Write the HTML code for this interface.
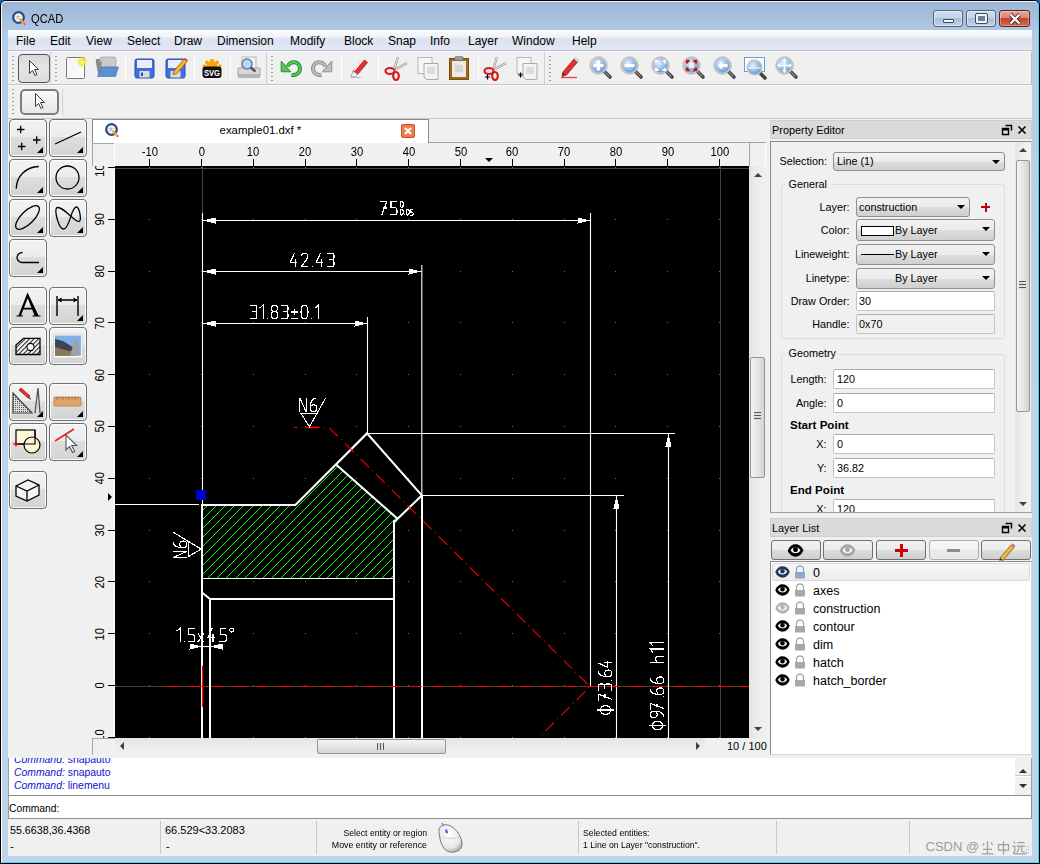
<!DOCTYPE html>
<html><head><meta charset="utf-8">
<style>
*{box-sizing:border-box;margin:0;padding:0}
html,body{width:1040px;height:864px;overflow:hidden}
body{position:relative;font-family:"Liberation Sans",sans-serif;font-size:11px;color:#000;background:#bcd2ea}
.a{position:absolute}
.t{position:absolute;white-space:nowrap;line-height:1}
.tb{position:absolute;border:1px solid #707070;border-radius:4px;background:linear-gradient(#f3f3f3 0,#ececec 46%,#dedede 47%,#d3d3d3 100%);box-shadow:inset 0 0 0 1px rgba(255,255,255,.85)}
.tri{position:absolute;width:0;height:0;border-left:6px solid transparent;border-bottom:6px solid #000}
.cb{position:absolute;border:1px solid #8e8f8f;border-radius:3px;background:linear-gradient(#f2f2f2 0,#ebebeb 50%,#dddddd 51%,#cfcfcf 100%)}
.cb:after{content:"";position:absolute;right:4px;top:7px;border-left:4px solid transparent;border-right:4px solid transparent;border-top:4px solid #000}
.ed{position:absolute;border:1px solid #c5c5c5;border-top-color:#abadb3;background:#fff;border-radius:2px}
.sep{position:absolute;width:1px;background:#d4d4d4;border-right:1px solid #fff}
.hd{position:absolute;width:2px;background:repeating-linear-gradient(#9a9a9a 0,#9a9a9a 1px,transparent 1px,transparent 4px)}
</style></head><body>
<!-- window frame -->
<div class="a" style="left:0;top:0;width:1040px;height:864px;background:#1a5fb4"></div>
<div class="a" style="left:0;top:0;width:1040px;height:864px;border:1px solid #000;border-radius:6px 6px 0 0;background:linear-gradient(#9ab4d4 0,#a9c2de 20px,#b6cde6 40px,#bcd2ea 300px,#bed4eb 864px)"></div>
<div class="a" style="left:1px;top:1px;width:1038px;height:862px;border:1px solid #fff;border-right-color:#3ad8f4;border-bottom-color:#3ad8f4;border-radius:5px 5px 0 0;opacity:.9"></div>
<!-- title -->
<svg class="a" style="left:10.5px;top:10.2px" width="16" height="16" viewBox="0 0 16 16"><circle cx="7.5" cy="7.5" r="5.3" fill="#fbfbfb" stroke="#2c4a92" stroke-width="2.3"/><path d="M4.5 6.5h5M7 4.5v5" stroke="#bbb" stroke-width=".8"/><path d="M5 9.5l3-3" stroke="#e07070" stroke-width=".8"/><path d="M8.5 8.5l4 4.5" stroke="#f2a818" stroke-width="2.2"/><path d="M12.7 13.2l1.6 1.6" stroke="#e06060" stroke-width="2"/></svg>
<div class="t" style="left:31px;top:12.5px;font-size:12px;color:#000;transform:scaleX(.93);transform-origin:left">QCAD</div>
<div class="a" style="left:933px;top:10px;width:30px;height:17px;border:1px solid #52627a;border-radius:3px;background:linear-gradient(#cddcee 0,#c3d4ea 45%,#a9bfdb 50%,#bcd0e8 100%);box-shadow:inset 0 0 0 1px rgba(255,255,255,.5)"><div class="a" style="left:9px;top:8px;width:11px;height:4px;background:#f4f4f4;border:1px solid #3c4a60;border-radius:1px"></div></div>
<div class="a" style="left:966px;top:10px;width:30px;height:17px;border:1px solid #52627a;border-radius:3px;background:linear-gradient(#cddcee 0,#c3d4ea 45%,#a9bfdb 50%,#bcd0e8 100%);box-shadow:inset 0 0 0 1px rgba(255,255,255,.5)"><div class="a" style="left:9px;top:3px;width:11px;height:9px;border:2px solid #f4f4f4;outline:1px solid #3c4a60;border-radius:1px;background:#6b7d99"></div></div>
<div class="a" style="left:999px;top:10px;width:31px;height:17px;border:1px solid #5a1f1f;border-radius:3px;background:linear-gradient(#e8a495 0,#dc8a78 45%,#c2442a 50%,#d7694f 100%);box-shadow:inset 0 0 0 1px rgba(255,255,255,.35)"><svg class="a" style="left:8px;top:2px" width="14" height="12" viewBox="0 0 14 12"><path d="M2.5 1.5L11.5 10.5M11.5 1.5L2.5 10.5" stroke="#3b2020" stroke-width="4"/><path d="M2.5 1.5L11.5 10.5M11.5 1.5L2.5 10.5" stroke="#f6f6f6" stroke-width="2.4"/></svg></div>
<!-- menubar -->
<div class="a" style="left:8px;top:30px;width:1024px;height:21px;background:linear-gradient(#fbfcfe 0,#f1f3f9 7px,#dfe5f2 8px,#dde3f1 13px,#e5e9f5 20px);border-bottom:1px solid #b9bfcf"></div>
<div class="t" style="left:16px;top:35px;font-size:12px">File</div>
<div class="t" style="left:50px;top:35px;font-size:12px">Edit</div>
<div class="t" style="left:86px;top:35px;font-size:12px">View</div>
<div class="t" style="left:127px;top:35px;font-size:12px">Select</div>
<div class="t" style="left:174px;top:35px;font-size:12px">Draw</div>
<div class="t" style="left:217px;top:35px;font-size:12px">Dimension</div>
<div class="t" style="left:290px;top:35px;font-size:12px">Modify</div>
<div class="t" style="left:344px;top:35px;font-size:12px">Block</div>
<div class="t" style="left:388px;top:35px;font-size:12px">Snap</div>
<div class="t" style="left:430px;top:35px;font-size:12px">Info</div>
<div class="t" style="left:468px;top:35px;font-size:12px">Layer</div>
<div class="t" style="left:512px;top:35px;font-size:12px">Window</div>
<div class="t" style="left:572px;top:35px;font-size:12px">Help</div>
<!-- toolbars -->
<div class="a" style="left:8px;top:51px;width:1024px;height:34px;background:#f0f0f0;border-bottom:1px solid #c4c4c4;border-right:1px solid #bdbdbd;border-top:1px solid #fafafa"></div>
<div class="a" style="left:8px;top:85px;width:1024px;height:34px;background:#f0f0f0;border-bottom:1px solid #c4c4c4;border-top:1px solid #fafafa"></div>
<div class="hd" style="left:12px;top:56px;height:26px"></div>
<div class="a" style="left:18px;top:54px;width:32px;height:29px;border:1px solid #555;border-radius:4px;background:linear-gradient(#d9d9d9,#e4e4e4 50%,#dcdcdc)"></div>
<svg class="a" style="left:26px;top:59px" width="16" height="20" viewBox="0 0 16 20"><path d="M3.5 1.5v13l3-3 2.5 5 2-1-2.5-5h4z" fill="#fff" stroke="#3a3a3a" stroke-width="1"/></svg>
<div class="a" style="left:50px;top:52px;width:1px;height:32px;background:#d0d0d0"></div>
<div class="hd" style="left:55px;top:56px;height:26px"></div>
<svg class="a" style="left:64px;top:55px" width="26" height="26" viewBox="0 0 26 26"><defs><linearGradient id="nd" x1="0" y1="0" x2="1" y2="1"><stop offset="0" stop-color="#f2f2f2"/><stop offset="1" stop-color="#fdfdfd"/></linearGradient><radialGradient id="gl"><stop offset="0" stop-color="#ffffc0"/><stop offset=".45" stop-color="#f0ea20"/><stop offset="1" stop-color="#f0ea20" stop-opacity="0"/></radialGradient></defs><rect x="2.5" y="2.5" width="18" height="21" rx="1" fill="url(#nd)" stroke="#7a7a7a"/><circle cx="18" cy="7" r="5.5" fill="url(#gl)"/></svg>
<svg class="a" style="left:94px;top:56px" width="26" height="24" viewBox="0 0 26 24"><path d="M2 3h6l2 2h-8z" fill="#888"/><rect x="6" y="1" width="16" height="10" rx="2" fill="#c9c9c9" stroke="#999" stroke-width=".6"/><path d="M1.5 4.5l3 15.5h1L8 6z" fill="#8a8a8a"/><path d="M7 11h17.5l-3 9.5H3.5z" fill="#5b8fd0" stroke="#4a78b8" stroke-width=".7"/></svg>
<div class="sep" style="left:125px;top:56px;height:24px"></div>
<svg class="a" style="left:134px;top:58px" width="21" height="21" viewBox="0 0 21 21"><rect x="1" y="1" width="19" height="19" rx="2" fill="#3f70e0" stroke="#2a4fb5"/><rect x="3" y="2" width="15" height="8" fill="#e8eefa"/><rect x="5.5" y="13" width="10" height="6.5" fill="#dcdcdc"/><rect x="7" y="14.5" width="2" height="3.5" fill="#2a4fb5"/></svg>
<svg class="a" style="left:165px;top:56px" width="24" height="24" viewBox="0 0 24 24"><rect x="1" y="3" width="19" height="19" rx="2" fill="#3f70e0" stroke="#2a4fb5"/><rect x="3" y="4" width="15" height="8" fill="#e8eefa"/><rect x="5.5" y="15" width="10" height="6.5" fill="#dcdcdc"/><path d="M9 15l10-12 3 2.5-10 12-4 1z" fill="#f5b630" stroke="#8a5a10" stroke-width=".8"/><path d="M19 3l3 2.5 1-1.2-3-2.5z" fill="#e04040"/></svg>
<div class="sep" style="left:194px;top:56px;height:24px"></div>
<svg class="a" style="left:201px;top:56px" width="22" height="24" viewBox="0 0 22 24"><g fill="#f7a600"><circle cx="11" cy="5" r="2.2"/><circle cx="6" cy="6.5" r="2"/><circle cx="16" cy="6.5" r="2"/><circle cx="3.2" cy="10" r="1.8"/><circle cx="18.8" cy="10" r="1.8"/><circle cx="11" cy="10.5" r="5.5"/></g><rect x="1.5" y="10.5" width="19" height="11.5" rx="3" fill="#111"/><text x="11" y="20" font-family="Liberation Sans" font-weight="bold" font-size="9" fill="#fff" text-anchor="middle" transform="translate(11 0) scale(.85 1) translate(-11 0)">SVG</text></svg>
<div class="sep" style="left:230px;top:56px;height:24px"></div>
<svg class="a" style="left:236px;top:55px" width="26" height="26" viewBox="0 0 26 26"><rect x="6" y="2" width="14" height="12" fill="#f4f4f4" stroke="#aaa" stroke-width=".8"/><path d="M2 13h22v8h-22z" fill="#d8d8d8" stroke="#9a9a9a" stroke-width=".8"/><rect x="2" y="19" width="22" height="4" fill="#b5b5b5"/><circle cx="11" cy="9" r="5" fill="#bcd6f4" stroke="#5a7fa8" stroke-width="1.5"/><path d="M14.5 12.5l5 4" stroke="#555" stroke-width="2.4"/></svg>
<div class="a" style="left:266px;top:52px;width:1px;height:32px;background:#d0d0d0"></div>
<div class="hd" style="left:271px;top:56px;height:26px"></div>
<svg class="a" style="left:279px;top:57px" width="24" height="22" viewBox="0 0 24 22"><path d="M8.5 9.8A6.4 6.4 0 1 1 12.5 17.6" fill="none" stroke="#1f8a32" stroke-width="4"/><path d="M8.5 9.8A6.4 6.4 0 1 1 12.5 17.6" fill="none" stroke="#5cc25c" stroke-width="2.2"/><path d="M2.2 4.1V14.8H11.9Z" fill="#5cc25c" stroke="#1f8a32" stroke-width=".9"/></svg>
<svg class="a" style="left:310px;top:57px" width="24" height="22" viewBox="0 0 24 22"><g transform="translate(24 0) scale(-1 1)"><path d="M8.5 9.8A6.4 6.4 0 1 1 12.5 17.6" fill="none" stroke="#8a8a8a" stroke-width="4"/><path d="M8.5 9.8A6.4 6.4 0 1 1 12.5 17.6" fill="none" stroke="#bdbdbd" stroke-width="2.2"/><path d="M2.2 4.1V14.8H11.9Z" fill="#bdbdbd" stroke="#8a8a8a" stroke-width=".9"/></g></svg>
<div class="sep" style="left:341px;top:56px;height:24px"></div>
<svg class="a" style="left:349px;top:56px" width="24" height="24" viewBox="0 0 24 24"><path d="M4 15l10-12 4.5 3.5-10 12z" fill="#e03030" stroke="#a01818" stroke-width=".8"/><path d="M5 14.5l10-12" stroke="#fff" stroke-width="1.5"/><path d="M4 15l4.5 3.5-2 2.5-4.5-.5z" fill="#eee" stroke="#999" stroke-width=".8"/><path d="M2 21.5h10" stroke="#bbb"/></svg>
<div class="sep" style="left:378px;top:56px;height:24px"></div>
<svg class="a" style="left:384px;top:55px" width="26" height="26" viewBox="0 0 26 26"><path d="M10 15l4-13M12 14l11-6" stroke="#999" stroke-width="2.4"/><path d="M10 15l4-13M12 14l11-6" stroke="#e8e8e8" stroke-width="1"/><ellipse cx="6" cy="16" rx="4.5" ry="3" fill="none" stroke="#d81818" stroke-width="2.2"/><ellipse cx="12" cy="21" rx="2.8" ry="4" fill="none" stroke="#d81818" stroke-width="2.2"/></svg>
<svg class="a" style="left:416px;top:56px" width="26" height="25" viewBox="0 0 26 25"><rect x="2" y="1.5" width="14" height="16" fill="#f6f6f6" stroke="#aaa" stroke-width=".8"/><path d="M8 7.5h14v16h-11.5l-2.5-2.5z" fill="#f4f4f4" stroke="#999" stroke-width=".8"/><rect x="11" y="11" width="8" height="7" fill="#ddd"/></svg>
<svg class="a" style="left:447px;top:55px" width="25" height="26" viewBox="0 0 25 26"><rect x="2.5" y="3.5" width="19" height="21" fill="#a0661a" stroke="#7a4a10"/><rect x="5" y="6" width="14" height="16" fill="#eaeaea"/><rect x="8" y="1.5" width="8" height="4" rx="1" fill="#9a9a9a" stroke="#666" stroke-width=".6"/><rect x="8" y="10" width="8" height="7" fill="#d6d6d6"/></svg>
<div class="sep" style="left:478px;top:56px;height:24px"></div>
<svg class="a" style="left:483px;top:55px" width="26" height="26" viewBox="0 0 26 26"><path d="M10 15l4-13M12 14l11-6" stroke="#999" stroke-width="2.4"/><path d="M10 15l4-13M12 14l11-6" stroke="#e8e8e8" stroke-width="1"/><ellipse cx="6" cy="16" rx="4.5" ry="3" fill="none" stroke="#d81818" stroke-width="2.2"/><ellipse cx="12" cy="21" rx="2.8" ry="4" fill="none" stroke="#d81818" stroke-width="2.2"/><path d="M2 22h5M4.5 19.5v5" stroke="#000" stroke-width="1.2"/></svg>
<svg class="a" style="left:515px;top:56px" width="26" height="25" viewBox="0 0 26 25"><rect x="2" y="1.5" width="14" height="16" fill="#f6f6f6" stroke="#aaa" stroke-width=".8"/><path d="M8 7.5h14v16h-11.5l-2.5-2.5z" fill="#f4f4f4" stroke="#999" stroke-width=".8"/><rect x="11" y="11" width="8" height="7" fill="#ddd"/><path d="M3 19h5M5.5 16.5v5" stroke="#000" stroke-width="1.2"/></svg>
<div class="a" style="left:544px;top:52px;width:1px;height:32px;background:#d0d0d0"></div>
<div class="hd" style="left:549px;top:56px;height:26px"></div>
<svg class="a" style="left:559px;top:56px" width="22" height="24" viewBox="0 0 22 24"><path d="M4 16l11-13 3.5 3-11 13-4.5 1.5z" fill="#e03030" stroke="#901818" stroke-width=".8"/><path d="M15 3l3.5 3 1.2-1.4-3.5-3z" fill="#eee" stroke="#888" stroke-width=".6"/><path d="M3.5 17.5l1.5 1.3" stroke="#222" stroke-width="1.5"/><path d="M2 21.5h16" stroke="#f04040" stroke-width="1.3"/></svg>
<svg class="a" style="left:588px;top:55px" width="26" height="26" viewBox="0 0 26 26"><defs><radialGradient id="mg589" cx=".4" cy=".35" r=".7"><stop offset="0" stop-color="#e6f1fc"/><stop offset=".6" stop-color="#8fb7e6"/><stop offset="1" stop-color="#5d8fcf"/></radialGradient></defs><path d="M15.5 15.5l6.5 6.5" stroke="#444" stroke-width="3.6" stroke-linecap="round"/><path d="M15.5 15.5l6 6" stroke="#888" stroke-width="1.2"/><circle cx="10.5" cy="10.5" r="7.9" fill="url(#mg589)" stroke="#cfcfcf" stroke-width="1.5"/><circle cx="10.5" cy="10.5" r="8.7" fill="none" stroke="#9a9a9a" stroke-width=".6"/><path d="M10.5 5.5v10M5.5 10.5h10" stroke="#fff" stroke-width="3"/></svg><svg class="a" style="left:619px;top:55px" width="26" height="26" viewBox="0 0 26 26"><defs><radialGradient id="mg620" cx=".4" cy=".35" r=".7"><stop offset="0" stop-color="#e6f1fc"/><stop offset=".6" stop-color="#8fb7e6"/><stop offset="1" stop-color="#5d8fcf"/></radialGradient></defs><path d="M15.5 15.5l6.5 6.5" stroke="#444" stroke-width="3.6" stroke-linecap="round"/><path d="M15.5 15.5l6 6" stroke="#888" stroke-width="1.2"/><circle cx="10.5" cy="10.5" r="7.9" fill="url(#mg620)" stroke="#cfcfcf" stroke-width="1.5"/><circle cx="10.5" cy="10.5" r="8.7" fill="none" stroke="#9a9a9a" stroke-width=".6"/><path d="M5.5 10.5h10" stroke="#fff" stroke-width="3"/></svg><svg class="a" style="left:650px;top:55px" width="26" height="26" viewBox="0 0 26 26"><defs><radialGradient id="mg651" cx=".4" cy=".35" r=".7"><stop offset="0" stop-color="#e6f1fc"/><stop offset=".6" stop-color="#8fb7e6"/><stop offset="1" stop-color="#5d8fcf"/></radialGradient></defs><path d="M15.5 15.5l6.5 6.5" stroke="#444" stroke-width="3.6" stroke-linecap="round"/><path d="M15.5 15.5l6 6" stroke="#888" stroke-width="1.2"/><circle cx="10.5" cy="10.5" r="7.9" fill="url(#mg651)" stroke="#cfcfcf" stroke-width="1.5"/><circle cx="10.5" cy="10.5" r="8.7" fill="none" stroke="#9a9a9a" stroke-width=".6"/><path d="M6 8V6h2.5M13 6h2v2.5M15 13v2h-2.5M8.5 15H6v-2.5" stroke="#fff" stroke-width="1.8" fill="none"/></svg><svg class="a" style="left:681px;top:55px" width="26" height="26" viewBox="0 0 26 26"><defs><radialGradient id="mg682" cx=".4" cy=".35" r=".7"><stop offset="0" stop-color="#e6f1fc"/><stop offset=".6" stop-color="#8fb7e6"/><stop offset="1" stop-color="#5d8fcf"/></radialGradient></defs><path d="M15.5 15.5l6.5 6.5" stroke="#444" stroke-width="3.6" stroke-linecap="round"/><path d="M15.5 15.5l6 6" stroke="#888" stroke-width="1.2"/><circle cx="10.5" cy="10.5" r="7.9" fill="url(#mg682)" stroke="#cfcfcf" stroke-width="1.5"/><circle cx="10.5" cy="10.5" r="8.7" fill="none" stroke="#9a9a9a" stroke-width=".6"/><path d="M6 8.5V6h2.5M12.5 6h2.5v2.5M15 12.5v2.5h-2.5M8.5 15H6v-2.5" stroke="#d01010" stroke-width="2.4" fill="none"/><rect x="8" y="8" width="5" height="5" fill="#e8eef8"/></svg><svg class="a" style="left:712px;top:55px" width="26" height="26" viewBox="0 0 26 26"><defs><radialGradient id="mg713" cx=".4" cy=".35" r=".7"><stop offset="0" stop-color="#e6f1fc"/><stop offset=".6" stop-color="#8fb7e6"/><stop offset="1" stop-color="#5d8fcf"/></radialGradient></defs><path d="M15.5 15.5l6.5 6.5" stroke="#444" stroke-width="3.6" stroke-linecap="round"/><path d="M15.5 15.5l6 6" stroke="#888" stroke-width="1.2"/><circle cx="10.5" cy="10.5" r="7.9" fill="url(#mg713)" stroke="#cfcfcf" stroke-width="1.5"/><circle cx="10.5" cy="10.5" r="8.7" fill="none" stroke="#9a9a9a" stroke-width=".6"/><path d="M5.5 10.5l4.5-4v2.5h5.5v3h-5.5v2.5z" fill="#fff"/></svg><svg class="a" style="left:743px;top:55px" width="28" height="26" viewBox="0 0 28 26"><rect x="1.5" y="2.5" width="20" height="14" fill="#fff" stroke="#6f9ad0" stroke-width="1"/><defs><radialGradient id="mgw" cx=".4" cy=".35" r=".7"><stop offset="0" stop-color="#e6f1fc"/><stop offset=".6" stop-color="#8fb7e6"/><stop offset="1" stop-color="#5d8fcf"/></radialGradient></defs><path d="M16 17l6 6" stroke="#444" stroke-width="3.6" stroke-linecap="round"/><circle cx="11.5" cy="12.5" r="7.5" fill="url(#mgw)" stroke="#c8c8c8" stroke-width="1.4"/><path d="M5 13h13" stroke="#fff" stroke-width="1"/></svg><svg class="a" style="left:774px;top:55px" width="26" height="26" viewBox="0 0 26 26"><defs><radialGradient id="mg775" cx=".4" cy=".35" r=".7"><stop offset="0" stop-color="#e6f1fc"/><stop offset=".6" stop-color="#8fb7e6"/><stop offset="1" stop-color="#5d8fcf"/></radialGradient></defs><path d="M15.5 15.5l6.5 6.5" stroke="#444" stroke-width="3.6" stroke-linecap="round"/><path d="M15.5 15.5l6 6" stroke="#888" stroke-width="1.2"/><circle cx="10.5" cy="10.5" r="7.9" fill="url(#mg775)" stroke="#cfcfcf" stroke-width="1.5"/><circle cx="10.5" cy="10.5" r="8.7" fill="none" stroke="#9a9a9a" stroke-width=".6"/><path d="M10.5 3l2.5 3h-5zM10.5 18l2.5-3h-5zM3 10.5l3-2.5v5zM18 10.5l-3-2.5v5z" fill="#fff"/><path d="M10.5 5v11M5 10.5h11" stroke="#fff" stroke-width="1.4"/></svg>
<!-- toolbar 2 -->
<div class="hd" style="left:12px;top:89px;height:26px"></div>
<div class="a" style="left:20px;top:89px;width:39px;height:26px;border:2px solid #7d7d7d;border-radius:5px;background:linear-gradient(#fafafa,#efefef 50%,#e8e8e8)"></div>
<svg class="a" style="left:32px;top:92px" width="16" height="20" viewBox="0 0 16 20"><path d="M3.5 1.5v13l3-3 2.5 5 2-1-2.5-5h4z" fill="#fff" stroke="#3a3a3a" stroke-width="1"/></svg>
<div class="a" style="left:62px;top:89px;width:1px;height:26px;background:#d0d0d0"></div>

<!-- main -->
<div class="a" style="left:8px;top:119px;width:1024px;height:640px;background:#f0f0f0"></div>
<div class="tb" style="left:9px;top:119px;width:38px;height:38px"></div><svg class="a" style="left:9px;top:119px" width="38" height="38" viewBox="0 0 38 38"><path d="M8 10.5h7.5M11.7 6.8v7.5M24 21h7.5M27.7 17.3v7.5M9 27.5h7.5M12.7 23.8v7.5" stroke="#000" fill="none" stroke-width="1.3"/></svg><div class="tri" style="left:37px;top:147px"></div><div class="tb" style="left:49px;top:119px;width:38px;height:38px"></div><svg class="a" style="left:49px;top:119px" width="38" height="38" viewBox="0 0 38 38"><path d="M6 25L32 13" stroke="#000" fill="none" stroke-width="1.3"/></svg><div class="tri" style="left:77px;top:147px"></div><div class="tb" style="left:9px;top:159px;width:38px;height:38px"></div><svg class="a" style="left:9px;top:159px" width="38" height="38" viewBox="0 0 38 38"><path d="M7.2 29.8C7.5 17 17 8 29.8 7.5" stroke="#000" fill="none" stroke-width="1.3"/></svg><div class="tri" style="left:37px;top:187px"></div><div class="tb" style="left:49px;top:159px;width:38px;height:38px"></div><svg class="a" style="left:49px;top:159px" width="38" height="38" viewBox="0 0 38 38"><circle cx="18.5" cy="18.5" r="11.5" stroke="#000" fill="none" stroke-width="1.3"/></svg><div class="tri" style="left:77px;top:187px"></div><div class="tb" style="left:9px;top:199px;width:38px;height:38px"></div><svg class="a" style="left:9px;top:199px" width="38" height="38" viewBox="0 0 38 38"><ellipse cx="18.5" cy="18.5" rx="15.5" ry="6.3" transform="rotate(-45 18.5 18.5)" stroke="#000" fill="none" stroke-width="1.3"/></svg><div class="tri" style="left:37px;top:227px"></div><div class="tb" style="left:49px;top:199px;width:38px;height:38px"></div><svg class="a" style="left:49px;top:199px" width="38" height="38" viewBox="0 0 38 38"><path d="M7.5 9C5.5 12 9.5 30 14.5 30C19 30 21 19 23 14C25 9 27 7 28.5 8.5C30.5 10.5 33 21.5 30 22.5C26.5 24 12 5 7.5 9Z" stroke="#000" fill="none" stroke-width="1.3"/></svg><div class="tri" style="left:77px;top:227px"></div><div class="tb" style="left:9px;top:239px;width:38px;height:38px"></div><svg class="a" style="left:9px;top:239px" width="38" height="38" viewBox="0 0 38 38"><path d="M13.5 13.5C10.5 13.5 8 16 8 18.5S10.5 23.5 13 23.5H30" stroke="#000" fill="none" stroke-width="1.3"/></svg><div class="tri" style="left:37px;top:267px"></div><div class="tb" style="left:9px;top:287px;width:38px;height:38px"></div><svg class="a" style="left:9px;top:287px" width="38" height="38" viewBox="0 0 38 38"><path d="M18.5 5.5L9.5 28.5H7.5V29.5H14V28.5H12L14.3 22.5H23.2L25.5 28.5H23.5V29.5H31.5V28.5H29.5ZM15 20.8L18.7 11.2L22.5 20.8Z" fill="#000"/></svg><div class="tb" style="left:49px;top:287px;width:38px;height:38px"></div><svg class="a" style="left:49px;top:287px" width="38" height="38" viewBox="0 0 38 38"><path d="M8 9v20M29 9v20M9 13h19" stroke="#000" fill="none" stroke-width="1.4"/><path d="M8.5 13l4-2.5v5zM28.5 13l-4-2.5v5z" fill="#000"/></svg><div class="tri" style="left:77px;top:315px"></div><div class="tb" style="left:9px;top:327px;width:38px;height:38px"></div><svg class="a" style="left:9px;top:327px" width="38" height="38" viewBox="0 0 38 38"><defs><pattern id="ht" width="3.2" height="3.2" patternUnits="userSpaceOnUse" patternTransform="rotate(45)"><rect width="3.2" height="3.2" fill="#f4f4f4"/><rect width="1" height="3.2" fill="#222"/></pattern></defs><path d="M7 27.5V18L14.5 11.3H31V27.5Z" fill="url(#ht)" stroke="#000" stroke-width="1.3"/><circle cx="21.5" cy="20" r="3.6" fill="#f4f4f4" stroke="#000" stroke-width="1.1"/></svg><div class="tb" style="left:49px;top:327px;width:38px;height:38px"></div><svg class="a" style="left:49px;top:327px" width="38" height="38" viewBox="0 0 38 38"><rect x="4.5" y="7" width="29" height="24" fill="#fafafa" stroke="#d0d0d0" stroke-width=".8"/><rect x="6" y="8.5" width="26" height="20" fill="#7fb0e8"/><path d="M6 12L14 14L22 19L26 22L26 28.5H6Z" fill="#3c4450"/><path d="M6 20L20 24L26 23L26 28.5H6Z" fill="#8a7858"/><path d="M26 12L29 12L31 28.5L21 28.5Z" fill="#a0a0a0"/></svg><div class="tb" style="left:9px;top:383px;width:38px;height:38px"></div><svg class="a" style="left:9px;top:383px" width="38" height="38" viewBox="0 0 38 38"><defs><pattern id="dt" width="2" height="2" patternUnits="userSpaceOnUse"><rect width="2" height="2" fill="#ddd"/><rect width="1" height="1" fill="#555"/></pattern></defs><path d="M4 10v20h19z" fill="url(#dt)" stroke="#444" stroke-width="1.2"/><path d="M10 7l9 8 2-2-9-8z" fill="#e03030" stroke="#901010" stroke-width=".7"/><path d="M19 15l3 2-1-3z" fill="#333"/><path d="M29 5l-3 25M29 5l2 25" stroke="#555" stroke-width="1.3" fill="none"/></svg><div class="tri" style="left:37px;top:411px"></div><div class="tb" style="left:49px;top:383px;width:38px;height:38px"></div><svg class="a" style="left:49px;top:383px" width="38" height="38" viewBox="0 0 38 38"><rect x="5" y="14" width="27" height="9" rx="1" fill="#e0a46a" stroke="#b87a40" stroke-width=".8"/><path d="M8 14v3M11 14v2M14 14v3M17 14v2M20 14v3M23 14v2M26 14v3M29 14v2" stroke="#9a6030" stroke-width=".8"/></svg><div class="tri" style="left:77px;top:411px"></div><div class="tb" style="left:9px;top:423px;width:38px;height:38px"></div><svg class="a" style="left:9px;top:423px" width="38" height="38" viewBox="0 0 38 38"><rect x="7" y="7" width="19" height="14" fill="#fff8d8" stroke="#000" stroke-width="1.2"/><circle cx="23" cy="22" r="8" fill="#fff8d8" stroke="#000" stroke-width="1.2"/><path d="M7 21h19V7" fill="none" stroke="#000" stroke-width="1.2"/><path d="M4.5 21h5M7 18.5v5" stroke="#e00" stroke-width="1.3"/></svg><div class="tb" style="left:49px;top:423px;width:38px;height:38px"></div><svg class="a" style="left:49px;top:423px" width="38" height="38" viewBox="0 0 38 38"><path d="M6 18L25 6" stroke="#e82020" stroke-width="1.6"/><path d="M17 12v15l3.5-3.5 3 6 2.2-1-3-6h5z" fill="#fff" stroke="#555" stroke-width="1.1"/></svg><div class="tri" style="left:77px;top:451px"></div><div class="tb" style="left:9px;top:471px;width:38px;height:38px"></div><svg class="a" style="left:9px;top:471px" width="38" height="38" viewBox="0 0 38 38"><path d="M7 15l12-6 11 5v10l-12 6-11-5z" fill="#f4f4f4" stroke="#000" stroke-width="1.3"/><path d="M7 15l11 5 12-6M18 20v10" fill="none" stroke="#000" stroke-width="1.3"/></svg>
<div class="a" style="left:92px;top:119px;width:337px;height:25px;background:#fff;border:1px solid #898c95;border-bottom:none"></div><svg class="a" style="left:104.4px;top:122.2px" width="16" height="16" viewBox="0 0 16 16"><circle cx="7.5" cy="7.5" r="5.3" fill="#fbfbfb" stroke="#2c4a92" stroke-width="2.3"/><path d="M4.5 6.5h5M7 4.5v5" stroke="#bbb" stroke-width=".8"/><path d="M5 9.5l3-3" stroke="#e07070" stroke-width=".8"/><path d="M8.5 8.5l4 4.5" stroke="#f2a818" stroke-width="2.2"/><path d="M12.7 13.2l1.6 1.6" stroke="#e06060" stroke-width="2"/></svg><div class="t" style="left:219.6px;top:125px;font-size:11.4px">example01.dxf *</div><div class="a" style="left:401px;top:124px;width:14px;height:14px;border:1px solid #d9452a;border-radius:2px;background:#e8804a"><svg class="a" style="left:2px;top:2px" width="8" height="8" viewBox="0 0 8 8"><path d="M1 1l6 6M7 1l-6 6" stroke="#fff" stroke-width="2"/></svg></div><div class="a" style="left:429px;top:142px;width:337px;height:1px;background:#a5a5a5"></div><div class="a" style="left:92px;top:143px;width:1px;height:23px;background:#a5a5a5"></div><div class="a" style="left:92px;top:143px;width:23px;height:1px;background:#a5a5a5"></div><div class="a" style="left:114px;top:143px;width:1px;height:23px;background:#fff"></div><div class="a" style="left:115px;top:143px;width:634px;height:23px;background:#f0f0f0"></div><div class="a" style="left:749px;top:143px;width:1px;height:23px;background:#a5a5a5"></div><div class="a" style="left:765px;top:143px;width:1px;height:23px;background:#fff"></div><div class="a" style="left:92px;top:166px;width:23px;height:572px;background:#f0f0f0"></div><div class="a" style="left:114px;top:166px;width:1px;height:572px;background:#fff"></div><div class="a" style="left:115px;top:143px;width:634px;height:23px;overflow:hidden"><div class="a" style="left:34px;top:16px;width:1px;height:7px;background:#000"></div><div class="t" style="left:4.7px;width:60px;text-align:center;top:2.5px;font-size:12.5px;transform:scaleX(.9)">-10</div><div class="a" style="left:86px;top:16px;width:1px;height:7px;background:#000"></div><div class="t" style="left:56.5px;width:60px;text-align:center;top:2.5px;font-size:12.5px;transform:scaleX(.9)">0</div><div class="a" style="left:138px;top:16px;width:1px;height:7px;background:#000"></div><div class="t" style="left:108.3px;width:60px;text-align:center;top:2.5px;font-size:12.5px;transform:scaleX(.9)">10</div><div class="a" style="left:190px;top:16px;width:1px;height:7px;background:#000"></div><div class="t" style="left:160.1px;width:60px;text-align:center;top:2.5px;font-size:12.5px;transform:scaleX(.9)">20</div><div class="a" style="left:241px;top:16px;width:1px;height:7px;background:#000"></div><div class="t" style="left:211.9px;width:60px;text-align:center;top:2.5px;font-size:12.5px;transform:scaleX(.9)">30</div><div class="a" style="left:293px;top:16px;width:1px;height:7px;background:#000"></div><div class="t" style="left:263.7px;width:60px;text-align:center;top:2.5px;font-size:12.5px;transform:scaleX(.9)">40</div><div class="a" style="left:345px;top:16px;width:1px;height:7px;background:#000"></div><div class="t" style="left:315.5px;width:60px;text-align:center;top:2.5px;font-size:12.5px;transform:scaleX(.9)">50</div><div class="a" style="left:397px;top:16px;width:1px;height:7px;background:#000"></div><div class="t" style="left:367.3px;width:60px;text-align:center;top:2.5px;font-size:12.5px;transform:scaleX(.9)">60</div><div class="a" style="left:449px;top:16px;width:1px;height:7px;background:#000"></div><div class="t" style="left:419.1px;width:60px;text-align:center;top:2.5px;font-size:12.5px;transform:scaleX(.9)">70</div><div class="a" style="left:500px;top:16px;width:1px;height:7px;background:#000"></div><div class="t" style="left:470.9px;width:60px;text-align:center;top:2.5px;font-size:12.5px;transform:scaleX(.9)">80</div><div class="a" style="left:552px;top:16px;width:1px;height:7px;background:#000"></div><div class="t" style="left:522.7px;width:60px;text-align:center;top:2.5px;font-size:12.5px;transform:scaleX(.9)">90</div><div class="a" style="left:604px;top:16px;width:1px;height:7px;background:#000"></div><div class="t" style="left:574.5px;width:60px;text-align:center;top:2.5px;font-size:12.5px;transform:scaleX(.9)">100</div></div><div class="a" style="left:92px;top:166px;width:23px;height:572px;overflow:hidden"><div class="a" style="left:16px;top:571px;width:7px;height:1px;background:#000"></div><div class="t" style="left:-22.5px;width:60px;text-align:center;top:565.0px;font-size:12.5px;transform:rotate(-90deg) scaleX(.9)">-10</div><div class="a" style="left:16px;top:519px;width:7px;height:1px;background:#000"></div><div class="t" style="left:-22.5px;width:60px;text-align:center;top:513.2px;font-size:12.5px;transform:rotate(-90deg) scaleX(.9)">0</div><div class="a" style="left:16px;top:467px;width:7px;height:1px;background:#000"></div><div class="t" style="left:-22.5px;width:60px;text-align:center;top:461.5px;font-size:12.5px;transform:rotate(-90deg) scaleX(.9)">10</div><div class="a" style="left:16px;top:415px;width:7px;height:1px;background:#000"></div><div class="t" style="left:-22.5px;width:60px;text-align:center;top:409.6px;font-size:12.5px;transform:rotate(-90deg) scaleX(.9)">20</div><div class="a" style="left:16px;top:364px;width:7px;height:1px;background:#000"></div><div class="t" style="left:-22.5px;width:60px;text-align:center;top:357.9px;font-size:12.5px;transform:rotate(-90deg) scaleX(.9)">30</div><div class="a" style="left:16px;top:312px;width:7px;height:1px;background:#000"></div><div class="t" style="left:-22.5px;width:60px;text-align:center;top:306.1px;font-size:12.5px;transform:rotate(-90deg) scaleX(.9)">40</div><div class="a" style="left:16px;top:260px;width:7px;height:1px;background:#000"></div><div class="t" style="left:-22.5px;width:60px;text-align:center;top:254.2px;font-size:12.5px;transform:rotate(-90deg) scaleX(.9)">50</div><div class="a" style="left:16px;top:208px;width:7px;height:1px;background:#000"></div><div class="t" style="left:-22.5px;width:60px;text-align:center;top:202.5px;font-size:12.5px;transform:rotate(-90deg) scaleX(.9)">60</div><div class="a" style="left:16px;top:156px;width:7px;height:1px;background:#000"></div><div class="t" style="left:-22.5px;width:60px;text-align:center;top:150.7px;font-size:12.5px;transform:rotate(-90deg) scaleX(.9)">70</div><div class="a" style="left:16px;top:105px;width:7px;height:1px;background:#000"></div><div class="t" style="left:-22.5px;width:60px;text-align:center;top:98.9px;font-size:12.5px;transform:rotate(-90deg) scaleX(.9)">80</div><div class="a" style="left:16px;top:53px;width:7px;height:1px;background:#000"></div><div class="t" style="left:-22.5px;width:60px;text-align:center;top:47.1px;font-size:12.5px;transform:rotate(-90deg) scaleX(.9)">90</div><div class="a" style="left:16px;top:1px;width:7px;height:1px;background:#000"></div><div class="t" style="left:-22.5px;width:60px;text-align:center;top:-4.8px;font-size:12.5px;transform:rotate(-90deg) scaleX(.9)">100</div></div><div class="a" style="left:485px;top:158px;width:0;height:0;border-left:4px solid transparent;border-right:4px solid transparent;border-top:4px solid #000"></div><div class="a" style="left:108px;top:493px;width:0;height:0;border-top:4px solid transparent;border-bottom:4px solid transparent;border-left:4px solid #000"></div><div class="a" style="left:749px;top:166px;width:17px;height:572px;background:linear-gradient(90deg,#e3e3e3,#ececec 40%,#f0f0f0)"></div><div class="a" style="left:754px;top:173px;width:0;height:0;border-left:4px solid transparent;border-right:4px solid transparent;border-bottom:4px solid #404040"></div><div class="a" style="left:754px;top:727px;width:0;height:0;border-left:4px solid transparent;border-right:4px solid transparent;border-top:4px solid #404040"></div><div class="a" style="left:750px;top:357px;width:15px;height:121px;border:1px solid #959595;border-radius:2px;background:linear-gradient(90deg,#f2f2f2,#e6e6e6 50%,#d2d2d2)"></div><div class="a" style="left:754px;top:412px;width:7px;height:8px;background:repeating-linear-gradient(#555 0,#555 1px,#ddd 1px,#ddd 3px)"></div><div class="a" style="left:92px;top:738px;width:674px;height:17px;background:#f0f0f0"></div><div class="a" style="left:92px;top:738px;width:23px;height:17px;border-left:1px solid #a5a5a5;border-top:1px solid #a5a5a5;background:#f0f0f0"></div><div class="a" style="left:115px;top:738px;width:590px;height:17px;background:linear-gradient(#e3e3e3,#ececec 40%,#f0f0f0)"></div><div class="a" style="left:120px;top:742px;width:0;height:0;border-top:4px solid transparent;border-bottom:4px solid transparent;border-right:4px solid #404040"></div><div class="a" style="left:696px;top:742px;width:0;height:0;border-top:4px solid transparent;border-bottom:4px solid transparent;border-left:4px solid #404040"></div><div class="a" style="left:317px;top:739px;width:129px;height:15px;border:1px solid #959595;border-radius:2px;background:linear-gradient(#f2f2f2,#e6e6e6 50%,#d2d2d2)"></div><div class="a" style="left:377px;top:743px;width:7px;height:7px;background:repeating-linear-gradient(90deg,#555 0,#555 1px,#ddd 1px,#ddd 3px)"></div><div class="t" style="left:727px;top:741px;font-size:11px">10 / 100</div>
<!-- canvas -->
<svg class="a" style="left:0;top:0" width="1040" height="864" viewBox="0 0 1040 864"><defs><clipPath id="cv"><rect x="115" y="166" width="634" height="572"/></clipPath><clipPath id="hc"><polygon points="202,505 295.4,505 336,464.5 397.6,518.6 394,522 394,578 202,578"/></clipPath></defs><rect x="115" y="166" width="634" height="572" fill="#000"/><g clip-path="url(#cv)" shape-rendering="crispEdges"><path d="M149,737h1v1h-1zM149,685h1v1h-1zM149,633h1v1h-1zM149,581h1v1h-1zM149,530h1v1h-1zM149,478h1v1h-1zM149,426h1v1h-1zM149,374h1v1h-1zM149,322h1v1h-1zM149,271h1v1h-1zM149,219h1v1h-1zM149,167h1v1h-1zM201,737h1v1h-1zM201,685h1v1h-1zM201,633h1v1h-1zM201,581h1v1h-1zM201,530h1v1h-1zM201,478h1v1h-1zM201,426h1v1h-1zM201,374h1v1h-1zM201,322h1v1h-1zM201,271h1v1h-1zM201,219h1v1h-1zM201,167h1v1h-1zM253,737h1v1h-1zM253,685h1v1h-1zM253,633h1v1h-1zM253,581h1v1h-1zM253,530h1v1h-1zM253,478h1v1h-1zM253,426h1v1h-1zM253,374h1v1h-1zM253,322h1v1h-1zM253,271h1v1h-1zM253,219h1v1h-1zM253,167h1v1h-1zM305,737h1v1h-1zM305,685h1v1h-1zM305,633h1v1h-1zM305,581h1v1h-1zM305,530h1v1h-1zM305,478h1v1h-1zM305,426h1v1h-1zM305,374h1v1h-1zM305,322h1v1h-1zM305,271h1v1h-1zM305,219h1v1h-1zM305,167h1v1h-1zM356,737h1v1h-1zM356,685h1v1h-1zM356,633h1v1h-1zM356,581h1v1h-1zM356,530h1v1h-1zM356,478h1v1h-1zM356,426h1v1h-1zM356,374h1v1h-1zM356,322h1v1h-1zM356,271h1v1h-1zM356,219h1v1h-1zM356,167h1v1h-1zM408,737h1v1h-1zM408,685h1v1h-1zM408,633h1v1h-1zM408,581h1v1h-1zM408,530h1v1h-1zM408,478h1v1h-1zM408,426h1v1h-1zM408,374h1v1h-1zM408,322h1v1h-1zM408,271h1v1h-1zM408,219h1v1h-1zM408,167h1v1h-1zM460,737h1v1h-1zM460,685h1v1h-1zM460,633h1v1h-1zM460,581h1v1h-1zM460,530h1v1h-1zM460,478h1v1h-1zM460,426h1v1h-1zM460,374h1v1h-1zM460,322h1v1h-1zM460,271h1v1h-1zM460,219h1v1h-1zM460,167h1v1h-1zM512,737h1v1h-1zM512,685h1v1h-1zM512,633h1v1h-1zM512,581h1v1h-1zM512,530h1v1h-1zM512,478h1v1h-1zM512,426h1v1h-1zM512,374h1v1h-1zM512,322h1v1h-1zM512,271h1v1h-1zM512,219h1v1h-1zM512,167h1v1h-1zM564,737h1v1h-1zM564,685h1v1h-1zM564,633h1v1h-1zM564,581h1v1h-1zM564,530h1v1h-1zM564,478h1v1h-1zM564,426h1v1h-1zM564,374h1v1h-1zM564,322h1v1h-1zM564,271h1v1h-1zM564,219h1v1h-1zM564,167h1v1h-1zM615,737h1v1h-1zM615,685h1v1h-1zM615,633h1v1h-1zM615,581h1v1h-1zM615,530h1v1h-1zM615,478h1v1h-1zM615,426h1v1h-1zM615,374h1v1h-1zM615,322h1v1h-1zM615,271h1v1h-1zM615,219h1v1h-1zM615,167h1v1h-1zM667,737h1v1h-1zM667,685h1v1h-1zM667,633h1v1h-1zM667,581h1v1h-1zM667,530h1v1h-1zM667,478h1v1h-1zM667,426h1v1h-1zM667,374h1v1h-1zM667,322h1v1h-1zM667,271h1v1h-1zM667,219h1v1h-1zM667,167h1v1h-1zM719,737h1v1h-1zM719,685h1v1h-1zM719,633h1v1h-1zM719,581h1v1h-1zM719,530h1v1h-1zM719,478h1v1h-1zM719,426h1v1h-1zM719,374h1v1h-1zM719,322h1v1h-1zM719,271h1v1h-1zM719,219h1v1h-1zM719,167h1v1h-1z" fill="#6e6e6e"/><line x1="115.00" y1="168.50" x2="749.00" y2="168.50" stroke="#444" stroke-width="1" /><line x1="115.00" y1="686.50" x2="749.00" y2="686.50" stroke="#444" stroke-width="1" /><line x1="202.50" y1="166.00" x2="202.50" y2="738.00" stroke="#444" stroke-width="1" /><line x1="720.50" y1="166.00" x2="720.50" y2="738.00" stroke="#444" stroke-width="1" /></g><g clip-path="url(#cv)"><path clip-path="url(#hc)" d="M-2.00,440L-162.00,600M7.00,440L-153.00,600M16.00,440L-144.00,600M25.00,440L-135.00,600M34.00,440L-126.00,600M43.00,440L-117.00,600M53.00,440L-107.00,600M62.00,440L-98.00,600M71.00,440L-89.00,600M80.00,440L-80.00,600M89.00,440L-71.00,600M98.00,440L-62.00,600M108.00,440L-52.00,600M117.00,440L-43.00,600M126.00,440L-34.00,600M135.00,440L-25.00,600M144.00,440L-16.00,600M153.00,440L-7.00,600M163.00,440L3.00,600M172.00,440L12.00,600M181.00,440L21.00,600M190.00,440L30.00,600M199.00,440L39.00,600M209.00,440L49.00,600M218.00,440L58.00,600M227.00,440L67.00,600M236.00,440L76.00,600M245.00,440L85.00,600M254.00,440L94.00,600M264.00,440L104.00,600M273.00,440L113.00,600M282.00,440L122.00,600M291.00,440L131.00,600M300.00,440L140.00,600M309.00,440L149.00,600M319.00,440L159.00,600M328.00,440L168.00,600M337.00,440L177.00,600M346.00,440L186.00,600M355.00,440L195.00,600M364.00,440L204.00,600M374.00,440L214.00,600M383.00,440L223.00,600M392.00,440L232.00,600M401.00,440L241.00,600M410.00,440L250.00,600M419.00,440L259.00,600M429.00,440L269.00,600M438.00,440L278.00,600M447.00,440L287.00,600M456.00,440L296.00,600M465.00,440L305.00,600M474.00,440L314.00,600M484.00,440L324.00,600M493.00,440L333.00,600M502.00,440L342.00,600M511.00,440L351.00,600M520.00,440L360.00,600M529.00,440L369.00,600M539.00,440L379.00,600M548.00,440L388.00,600M557.00,440L397.00,600M566.00,440L406.00,600M575.00,440L415.00,600M584.00,440L424.00,600M594.00,440L434.00,600M603.00,440L443.00,600M612.00,440L452.00,600M621.00,440L461.00,600M630.00,440L470.00,600M640.00,440L480.00,600M649.00,440L489.00,600M658.00,440L498.00,600M667.00,440L507.00,600M676.00,440L516.00,600M685.00,440L525.00,600M695.00,440L535.00,600M704.00,440L544.00,600M713.00,440L553.00,600M722.00,440L562.00,600M731.00,440L571.00,600M740.00,440L580.00,600M750.00,440L590.00,600M759.00,440L599.00,600M768.00,440L608.00,600M777.00,440L617.00,600M786.00,440L626.00,600M795.00,440L635.00,600M805.00,440L645.00,600M814.00,440L654.00,600M823.00,440L663.00,600M832.00,440L672.00,600M841.00,440L681.00,600M850.00,440L690.00,600M860.00,440L700.00,600M869.00,440L709.00,600M878.00,440L718.00,600M887.00,440L727.00,600M896.00,440L736.00,600M905.00,440L745.00,600M915.00,440L755.00,600M924.00,440L764.00,600M933.00,440L773.00,600M942.00,440L782.00,600M951.00,440L791.00,600M960.00,440L800.00,600M970.00,440L810.00,600M979.00,440L819.00,600M988.00,440L828.00,600M997.00,440L837.00,600" stroke="#00ff00" stroke-width="1" fill="none"/><line x1="202.50" y1="213.00" x2="202.50" y2="505.00" stroke="#fff" stroke-width="1.1" /><line x1="202.50" y1="220.50" x2="590.50" y2="220.50" stroke="#fff" stroke-width="1.1" /><line x1="590.50" y1="213.00" x2="590.50" y2="686.00" stroke="#fff" stroke-width="1.1" /><line x1="202.50" y1="271.50" x2="421.50" y2="271.50" stroke="#fff" stroke-width="1.1" /><line x1="421.80" y1="265.00" x2="421.80" y2="495.00" stroke="#fff" stroke-width="1.1" /><line x1="202.50" y1="323.50" x2="367.50" y2="323.50" stroke="#fff" stroke-width="1.1" /><line x1="367.50" y1="317.00" x2="367.50" y2="433.00" stroke="#fff" stroke-width="1.1" /><line x1="367.50" y1="433.50" x2="675.00" y2="433.50" stroke="#fff" stroke-width="1.1" /><line x1="422.00" y1="495.50" x2="624.00" y2="495.50" stroke="#fff" stroke-width="1.1" /><line x1="668.50" y1="433.50" x2="668.50" y2="738.00" stroke="#fff" stroke-width="1.1" /><line x1="616.50" y1="495.50" x2="616.50" y2="738.00" stroke="#fff" stroke-width="1.1" /><line x1="115.00" y1="504.50" x2="199.00" y2="504.50" stroke="#fff" stroke-width="1.1" /><line x1="190.00" y1="646.50" x2="222.00" y2="646.50" stroke="#fff" stroke-width="1.1" /><polygon points="203,220.5 215.50,223.50 215.50,217.50" fill="#fff" shape-rendering="crispEdges"/><polygon points="590,220.5 577.50,217.50 577.50,223.50" fill="#fff" shape-rendering="crispEdges"/><polygon points="203,271.5 215.50,274.50 215.50,268.50" fill="#fff" shape-rendering="crispEdges"/><polygon points="421,271.5 408.50,268.50 408.50,274.50" fill="#fff" shape-rendering="crispEdges"/><polygon points="203,323.5 215.50,326.50 215.50,320.50" fill="#fff" shape-rendering="crispEdges"/><polygon points="367,323.5 354.50,320.50 354.50,326.50" fill="#fff" shape-rendering="crispEdges"/><polygon points="668.5,434 665.50,446.50 671.50,446.50" fill="#fff" shape-rendering="crispEdges"/><polygon points="616.5,496 613.50,508.50 619.50,508.50" fill="#fff" shape-rendering="crispEdges"/><polygon points="202,646.5 189.50,643.50 189.50,649.50" fill="#fff" shape-rendering="crispEdges"/><polygon points="210,646.5 222.50,649.50 222.50,643.50" fill="#fff" shape-rendering="crispEdges"/><polyline points="202,505 295.4,505 367,433.4 421.8,495.4 397.6,518.8 394,522.5" fill="none" stroke="#fff" stroke-width="2.1"/><line x1="336.00" y1="464.50" x2="397.60" y2="518.80" stroke="#fff" stroke-width="2.1" /><g shape-rendering="crispEdges"><line x1="201.00" y1="505.00" x2="295.40" y2="505.00" stroke="#fff" stroke-width="2" /><line x1="202.00" y1="504.00" x2="202.00" y2="738.00" stroke="#fff" stroke-width="2" /><line x1="394.00" y1="520.00" x2="394.00" y2="738.00" stroke="#fff" stroke-width="2" /><line x1="422.00" y1="495.00" x2="422.00" y2="738.00" stroke="#fff" stroke-width="2" /><line x1="202.00" y1="578.50" x2="394.00" y2="578.50" stroke="#fff" stroke-width="1.5" /><line x1="210.00" y1="599.00" x2="394.00" y2="599.00" stroke="#fff" stroke-width="2" /><line x1="210.00" y1="599.00" x2="210.00" y2="738.00" stroke="#fff" stroke-width="2" /></g><line x1="202.00" y1="592.40" x2="210.00" y2="599.00" stroke="#fff" stroke-width="2" /><line x1="163.00" y1="686.50" x2="749.00" y2="686.50" stroke="#ff0000" stroke-width="1.2" stroke-dasharray="12,4.5,1,4.5" stroke-dashoffset="17" shape-rendering="crispEdges"/><polyline points="294,427.5 329,427.5 590,686.5 539,737.5" fill="none" stroke="#ff0000" stroke-width="1.05" stroke-dasharray="12,4.5,1,4.5" stroke-dashoffset="8.5"/><line x1="306.00" y1="427.50" x2="319.00" y2="427.50" stroke="#ff0000" stroke-width="1.6" /><line x1="202.50" y1="665.50" x2="202.50" y2="707.00" stroke="#ff0000" stroke-width="1.2" /><rect x="196" y="490" width="10" height="10" fill="#0000c8"/><g transform="translate(380.00,201.00)" fill="none" stroke="#fff" stroke-width="1.15" shape-rendering="crispEdges"><path transform="translate(0.00,0)" d="M0,0.2 L7,0.2 L1.8,13.9 M3.4,7 L6.6,7" vector-effect="non-scaling-stroke"/><path transform="translate(10.00,0)" d="M7,0.2 L1,0.2 L1,6.4 L4.4,6.4 C6.2,6.4 7,7.6 7,9.4 L7,11.2 C7,12.9 6.2,13.8 4.4,13.8 L0,13.8" vector-effect="non-scaling-stroke"/></g><g transform="translate(400.20,201.00) scale(0.43,0.46)" fill="none" stroke="#fff" stroke-width="1.15" shape-rendering="crispEdges"><path transform="translate(0.00,0)" d="M3.5,0.3 C0.2,0.3 0,4 0,7 C0,10 0.2,13.7 3.5,13.7 C6.8,13.7 7,10 7,7 C7,4 6.8,0.3 3.5,0.3Z" vector-effect="non-scaling-stroke"/></g><g transform="translate(400.20,209.20) scale(0.43,0.43)" fill="none" stroke="#fff" stroke-width="1.15" shape-rendering="crispEdges"><path transform="translate(0.00,0)" d="M3.5,0.3 C0.2,0.3 0,4 0,7 C0,10 0.2,13.7 3.5,13.7 C6.8,13.7 7,10 7,7 C7,4 6.8,0.3 3.5,0.3Z" vector-effect="non-scaling-stroke"/><path transform="translate(9.60,0)" d="M0.5,13.2 L0.5,14" vector-effect="non-scaling-stroke"/><path transform="translate(14.00,0)" d="M3.5,0.3 C0.2,0.3 0,4 0,7 C0,10 0.2,13.7 3.5,13.7 C6.8,13.7 7,10 7,7 C7,4 6.8,0.3 3.5,0.3Z" vector-effect="non-scaling-stroke"/><path transform="translate(23.00,0)" d="M7,0.2 L1,0.2 L1,6.4 L4.4,6.4 C6.2,6.4 7,7.6 7,9.4 L7,11.2 C7,12.9 6.2,13.8 4.4,13.8 L0,13.8" vector-effect="non-scaling-stroke"/></g><rect x="404" y="214" width="1" height="1" fill="#fff"/><g transform="translate(290.00,253.00)" fill="none" stroke="#fff" stroke-width="1.15" shape-rendering="crispEdges"><path transform="translate(0.00,0)" d="M4.4,0.2 L0.2,9.6 L7,9.6 M5.3,6.2 L5.3,14" vector-effect="non-scaling-stroke"/><path transform="translate(11.00,0)" d="M0.3,3 C0.8,0.8 2,0.2 3.6,0.2 C5.8,0.2 6.8,1.6 6.8,3.4 C6.8,5 6,6 5,7.3 L0.2,13.8 L7,13.8" vector-effect="non-scaling-stroke"/><path transform="translate(22.00,0)" d="M0.5,13.2 L0.5,14" vector-effect="non-scaling-stroke"/><path transform="translate(26.00,0)" d="M4.4,0.2 L0.2,9.6 L7,9.6 M5.3,6.2 L5.3,14" vector-effect="non-scaling-stroke"/><path transform="translate(37.00,0)" d="M0,0.2 L5.2,0.2 C6.4,0.2 7,0.9 7,2.2 L7,4.4 C7,5.8 6.2,6.6 5,6.6 L2.2,6.6 M5,6.6 C6.4,6.6 7,7.5 7,9 L7,11.8 C7,13.1 6.3,13.8 5,13.8 L0,13.8" vector-effect="non-scaling-stroke"/></g><g transform="translate(249.90,305.00)" fill="none" stroke="#fff" stroke-width="1.15" shape-rendering="crispEdges"><path transform="translate(0.00,0)" d="M0,0.2 L5.2,0.2 C6.4,0.2 7,0.9 7,2.2 L7,4.4 C7,5.8 6.2,6.6 5,6.6 L2.2,6.6 M5,6.6 C6.4,6.6 7,7.5 7,9 L7,11.8 C7,13.1 6.3,13.8 5,13.8 L0,13.8" vector-effect="non-scaling-stroke"/><path transform="translate(9.40,0)" d="M0.3,3 L3.8,0.2 L3.8,14" vector-effect="non-scaling-stroke"/><path transform="translate(17.10,0)" d="M0.5,13.2 L0.5,14" vector-effect="non-scaling-stroke"/><path transform="translate(21.10,0)" d="M3.5,0.2 C1.6,0.2 0.6,1.4 0.6,3.4 C0.6,5.3 1.6,6.6 3.5,6.6 C5.4,6.6 6.4,5.3 6.4,3.4 C6.4,1.4 5.4,0.2 3.5,0.2Z M3.5,6.6 C1.3,6.6 0.2,8 0.2,10.2 C0.2,12.4 1.3,13.8 3.5,13.8 C5.7,13.8 6.8,12.4 6.8,10.2 C6.8,8 5.7,6.6 3.5,6.6Z" vector-effect="non-scaling-stroke"/><path transform="translate(31.10,0)" d="M0,0.2 L5.2,0.2 C6.4,0.2 7,0.9 7,2.2 L7,4.4 C7,5.8 6.2,6.6 5,6.6 L2.2,6.6 M5,6.6 C6.4,6.6 7,7.5 7,9 L7,11.8 C7,13.1 6.3,13.8 5,13.8 L0,13.8" vector-effect="non-scaling-stroke"/><path transform="translate(41.10,0)" d="M3.5,4 L3.5,10.2 M0.2,7 L6.8,7 M0.2,13.3 L6.8,13.3" vector-effect="non-scaling-stroke"/><path transform="translate(51.10,0)" d="M3.5,0.3 C0.2,0.3 0,4 0,7 C0,10 0.2,13.7 3.5,13.7 C6.8,13.7 7,10 7,7 C7,4 6.8,0.3 3.5,0.3Z" vector-effect="non-scaling-stroke"/><path transform="translate(61.10,0)" d="M0.5,13.2 L0.5,14" vector-effect="non-scaling-stroke"/><path transform="translate(64.80,0)" d="M0.3,3 L3.8,0.2 L3.8,14" vector-effect="non-scaling-stroke"/></g><g transform="translate(299.50,398.00)" fill="none" stroke="#fff" stroke-width="1.15" shape-rendering="crispEdges"><path transform="translate(0.00,0)" d="M0.2,14 L0.2,0 L6.8,14 L6.8,0" vector-effect="non-scaling-stroke"/><path transform="translate(10.50,0)" d="M6,0.3 C2,0.5 0.2,4 0.2,9.5 C0.2,12.5 1.5,13.8 3.5,13.8 C5.6,13.8 6.8,12.3 6.8,10.2 C6.8,8 5.6,6.8 3.5,6.8 C2,6.8 0.8,7.5 0.3,8.5" vector-effect="non-scaling-stroke"/></g><g shape-rendering="crispEdges" fill="none" stroke="#fff" stroke-width="1.1"><path d="M325.6,398.2L309.4,426.7L301,413.4H317.5"/></g><g transform="translate(173.00,558.00) rotate(-90)" fill="none" stroke="#fff" stroke-width="1.15" shape-rendering="crispEdges"><path transform="translate(0.00,0)" d="M0.2,14 L0.2,0 L6.8,14 L6.8,0" vector-effect="non-scaling-stroke"/><path transform="translate(10.20,0)" d="M6,0.3 C2,0.5 0.2,4 0.2,9.5 C0.2,12.5 1.5,13.8 3.5,13.8 C5.6,13.8 6.8,12.3 6.8,10.2 C6.8,8 5.6,6.8 3.5,6.8 C2,6.8 0.8,7.5 0.3,8.5" vector-effect="non-scaling-stroke"/></g><g shape-rendering="crispEdges" fill="none" stroke="#fff" stroke-width="1.1"><path d="M173.3,532.3L201.1,549.1L188.8,556.3V541.7"/></g><g transform="translate(176.50,628.00)" fill="none" stroke="#fff" stroke-width="1.15" shape-rendering="crispEdges"><path transform="translate(0.00,0)" d="M0.3,3 L3.8,0.2 L3.8,14" vector-effect="non-scaling-stroke"/><path transform="translate(7.40,0)" d="M0.5,13.2 L0.5,14" vector-effect="non-scaling-stroke"/><path transform="translate(11.20,0)" d="M7,0.2 L1,0.2 L1,6.4 L4.4,6.4 C6.2,6.4 7,7.6 7,9.4 L7,11.2 C7,12.9 6.2,13.8 4.4,13.8 L0,13.8" vector-effect="non-scaling-stroke"/><path transform="translate(21.30,0)" d="M0,5.5 L6,14 M6,5.5 L0,14" vector-effect="non-scaling-stroke"/><path transform="translate(31.20,0)" d="M4.4,0.2 L0.2,9.6 L7,9.6 M5.3,6.2 L5.3,14" vector-effect="non-scaling-stroke"/><path transform="translate(42.90,0)" d="M7,0.2 L1,0.2 L1,6.4 L4.4,6.4 C6.2,6.4 7,7.6 7,9.4 L7,11.2 C7,12.9 6.2,13.8 4.4,13.8 L0,13.8" vector-effect="non-scaling-stroke"/><path transform="translate(53.00,0)" d="M2.2,0.3 C0.9,0.3 0.3,1 0.3,2.2 C0.3,3.4 0.9,4.1 2.2,4.1 C3.5,4.1 4.1,3.4 4.1,2.2 C4.1,1 3.5,0.3 2.2,0.3Z" vector-effect="non-scaling-stroke"/></g><g transform="translate(598.00,714.50) rotate(-90)" fill="none" stroke="#fff" stroke-width="1.15" shape-rendering="crispEdges"><path transform="translate(0.00,0)" d="M4.5,2.5 C1.6,2.5 0.2,4.8 0.2,7.5 C0.2,10.2 1.6,12.5 4.5,12.5 C7.4,12.5 8.8,10.2 8.8,7.5 C8.8,4.8 7.4,2.5 4.5,2.5Z M4.5,-1.5 L4.5,15.5" vector-effect="non-scaling-stroke"/><path transform="translate(13.40,0)" d="M0,0.2 L7,0.2 L1.8,13.9 M3.4,7 L6.6,7" vector-effect="non-scaling-stroke"/><path transform="translate(23.50,0)" d="M0,0.2 L5.2,0.2 C6.4,0.2 7,0.9 7,2.2 L7,4.4 C7,5.8 6.2,6.6 5,6.6 L2.2,6.6 M5,6.6 C6.4,6.6 7,7.5 7,9 L7,11.8 C7,13.1 6.3,13.8 5,13.8 L0,13.8" vector-effect="non-scaling-stroke"/><path transform="translate(33.10,0)" d="M0.5,13.2 L0.5,14" vector-effect="non-scaling-stroke"/><path transform="translate(37.70,0)" d="M6,0.3 C2,0.5 0.2,4 0.2,9.5 C0.2,12.5 1.5,13.8 3.5,13.8 C5.6,13.8 6.8,12.3 6.8,10.2 C6.8,8 5.6,6.8 3.5,6.8 C2,6.8 0.8,7.5 0.3,8.5" vector-effect="non-scaling-stroke"/><path transform="translate(47.00,0)" d="M4.4,0.2 L0.2,9.6 L7,9.6 M5.3,6.2 L5.3,14" vector-effect="non-scaling-stroke"/></g><g transform="translate(650.00,730.00) rotate(-90)" fill="none" stroke="#fff" stroke-width="1.15" shape-rendering="crispEdges"><path transform="translate(0.00,0)" d="M4.5,2.5 C1.6,2.5 0.2,4.8 0.2,7.5 C0.2,10.2 1.6,12.5 4.5,12.5 C7.4,12.5 8.8,10.2 8.8,7.5 C8.8,4.8 7.4,2.5 4.5,2.5Z M4.5,-1.5 L4.5,15.5" vector-effect="non-scaling-stroke"/><path transform="translate(12.10,0)" d="M1,13.7 C5,13.5 6.8,10 6.8,4.5 C6.8,1.5 5.5,0.2 3.5,0.2 C1.4,0.2 0.2,1.7 0.2,3.8 C0.2,6 1.4,7.2 3.5,7.2 C5,7.2 6.2,6.5 6.7,5.5" vector-effect="non-scaling-stroke"/><path transform="translate(19.70,0)" d="M0,0.2 L7,0.2 L1.8,13.9 M3.4,7 L6.6,7" vector-effect="non-scaling-stroke"/><path transform="translate(33.10,0)" d="M0.5,13.2 L0.5,14" vector-effect="non-scaling-stroke"/><path transform="translate(35.30,0)" d="M6,0.3 C2,0.5 0.2,4 0.2,9.5 C0.2,12.5 1.5,13.8 3.5,13.8 C5.6,13.8 6.8,12.3 6.8,10.2 C6.8,8 5.6,6.8 3.5,6.8 C2,6.8 0.8,7.5 0.3,8.5" vector-effect="non-scaling-stroke"/><path transform="translate(46.30,0)" d="M6,0.3 C2,0.5 0.2,4 0.2,9.5 C0.2,12.5 1.5,13.8 3.5,13.8 C5.6,13.8 6.8,12.3 6.8,10.2 C6.8,8 5.6,6.8 3.5,6.8 C2,6.8 0.8,7.5 0.3,8.5" vector-effect="non-scaling-stroke"/><path transform="translate(67.10,0)" d="M0.3,0 L0.3,14 M0.3,8 C1,6.3 2.2,5.6 3.6,5.6 C5.6,5.6 6.6,6.8 6.6,8.6 L6.6,14" vector-effect="non-scaling-stroke"/><path transform="translate(77.20,0)" d="M0.3,3 L3.8,0.2 L3.8,14" vector-effect="non-scaling-stroke"/><path transform="translate(83.60,0)" d="M0.3,3 L3.8,0.2 L3.8,14" vector-effect="non-scaling-stroke"/></g></g></svg>
<div class="a" style="left:770px;top:120px;width:262px;height:19px;background:#dadada;border:1px solid #cfcfcf"></div><div class="t" style="left:772px;top:124.5px;font-size:10.9px;">Property Editor</div><svg class="a" style="left:1000px;top:124px" width="30" height="12" viewBox="0 0 30 12"><path d="M5.5 1.5h6v5M2.5 4.5h6v6h-6z" fill="none" stroke="#000" stroke-width="1.4"/><path d="M2.5 5.5h6" stroke="#000" stroke-width="2"/><path d="M18.5 2.5l7 7M25.5 2.5l-7 7" stroke="#000" stroke-width="1.6"/></svg><div class="a" style="left:770px;top:141px;width:262px;height:372px;border:1px solid #8c8c8c;border-right-color:#d0d0d0;border-bottom-color:#d0d0d0;background:#f0f0f0;overflow:hidden"><div class="a" style="left:0;top:0;width:260px;height:370px"><div class="a" style="left:244px;top:0;width:16px;height:370px;background:linear-gradient(90deg,#e6e6e6,#efefef 50%,#f2f2f2)"></div><div class="a" style="left:248px;top:6px;width:0;height:0;border-left:4px solid transparent;border-right:4px solid transparent;border-bottom:4px solid #404040"></div><div class="a" style="left:248px;top:360px;width:0;height:0;border-left:4px solid transparent;border-right:4px solid transparent;border-top:4px solid #404040"></div><div class="a" style="left:245px;top:18px;width:14px;height:252px;border:1px solid #959595;border-radius:2px;background:linear-gradient(90deg,#f2f2f2,#e6e6e6 50%,#d2d2d2)"></div><div class="a" style="left:248px;top:139px;width:7px;height:8px;background:repeating-linear-gradient(#555 0,#555 1px,#ddd 1px,#ddd 3px)"></div></div></div><div class="t" style="left:779.5px;top:156px;font-size:10.8px;">Selection:</div><div class="cb" style="left:833px;top:152px;width:172px;height:19px"></div><div class="t" style="left:837px;top:156px;font-size:10.8px;">Line (1)</div><div class="a" style="left:781px;top:184px;width:224px;height:155px;border:1px solid #d5dfe5;border-radius:3px"></div><div class="a" style="left:785px;top:178px;width:46px;height:12px;background:#f0f0f0"></div><div class="t" style="left:788.5px;top:179px;font-size:10.8px;">General</div><div class="t" style="left:699.5px;width:150px;text-align:right;top:202px;font-size:10.8px">Layer:</div><div class="cb" style="left:856px;top:197px;width:114px;height:20px"></div><div class="t" style="left:859px;top:202px;font-size:10.8px;">construction</div><div class="a" style="left:981px;top:206px;width:9px;height:2px;background:#c00000"></div><div class="a" style="left:984.5px;top:202.5px;width:2px;height:9px;background:#c00000"></div><div class="t" style="left:699.5px;width:150px;text-align:right;top:225px;font-size:10.8px">Color:</div><div class="cb" style="left:856px;top:219px;width:139px;height:22px"></div><div class="a" style="left:861px;top:226px;width:33px;height:10px;border:1px solid #000;background:#fff"></div><div class="t" style="left:895px;top:225px;font-size:10.8px;">By Layer</div><div class="t" style="left:699.5px;width:150px;text-align:right;top:249px;font-size:10.8px">Lineweight:</div><div class="cb" style="left:856px;top:244px;width:139px;height:21px"></div><div class="a" style="left:861px;top:254px;width:33px;height:1px;background:#000"></div><div class="t" style="left:895px;top:249px;font-size:10.8px;">By Layer</div><div class="t" style="left:699.5px;width:150px;text-align:right;top:273px;font-size:10.8px">Linetype:</div><div class="cb" style="left:856px;top:268px;width:139px;height:21px"></div><div class="t" style="left:895px;top:273px;font-size:10.8px;">By Layer</div><div class="t" style="left:699.5px;width:150px;text-align:right;top:296px;font-size:10.8px">Draw Order:</div><div class="ed" style="left:856px;top:291px;width:139px;height:20px;background:#fff"></div><div class="t" style="left:859px;top:296px;font-size:10.8px;">30</div><div class="t" style="left:699.5px;width:150px;text-align:right;top:319px;font-size:10.8px">Handle:</div><div class="ed" style="left:856px;top:314px;width:139px;height:20px;background:#f0f0f0"></div><div class="t" style="left:859px;top:319px;font-size:10.8px;">0x70</div><div class="a" style="left:781px;top:354px;width:224px;height:170px;border:1px solid #d5dfe5;border-radius:3px"></div><div class="a" style="left:785px;top:347px;width:54px;height:12px;background:#f0f0f0"></div><div class="t" style="left:788.5px;top:348px;font-size:10.8px;">Geometry</div><div class="t" style="left:676.5px;width:150px;text-align:right;top:374px;font-size:10.8px">Length:</div><div class="ed" style="left:833px;top:369px;width:162px;height:20px;background:#fff"></div><div class="t" style="left:837px;top:374px;font-size:10.8px;">120</div><div class="t" style="left:676.5px;width:150px;text-align:right;top:398px;font-size:10.8px">Angle:</div><div class="ed" style="left:833px;top:393px;width:162px;height:20px;background:#fff"></div><div class="t" style="left:837px;top:398px;font-size:10.8px;">0</div><div class="t" style="left:790px;top:418.5px;font-size:11.6px;"><b>Start Point</b></div><div class="t" style="left:676.5px;width:150px;text-align:right;top:439px;font-size:10.8px">X:</div><div class="ed" style="left:833px;top:434px;width:162px;height:20px;background:#fff"></div><div class="t" style="left:837px;top:439px;font-size:10.8px;">0</div><div class="t" style="left:676.5px;width:150px;text-align:right;top:463px;font-size:10.8px">Y:</div><div class="ed" style="left:833px;top:458px;width:162px;height:20px;background:#fff"></div><div class="t" style="left:837px;top:463px;font-size:10.8px;">36.82</div><div class="t" style="left:790px;top:483.5px;font-size:11.6px;"><b>End Point</b></div><div class="t" style="left:676.5px;width:150px;text-align:right;top:504px;font-size:10.8px">X:</div><div class="ed" style="left:833px;top:499px;width:162px;height:20px;background:#fff"></div><div class="t" style="left:837px;top:504px;font-size:10.8px;">120</div><div class="a" style="left:770px;top:513px;width:262px;height:6px;background:#f0f0f0"></div><div class="a" style="left:770px;top:512px;width:262px;height:1px;background:#a0a0a0"></div><div class="a" style="left:770px;top:518px;width:262px;height:19px;background:#dadada;border:1px solid #cfcfcf"></div><div class="t" style="left:772px;top:522.5px;font-size:10.9px;">Layer List</div><svg class="a" style="left:1000px;top:522px" width="30" height="12" viewBox="0 0 30 12"><path d="M5.5 1.5h6v5M2.5 4.5h6v6h-6z" fill="none" stroke="#000" stroke-width="1.4"/><path d="M2.5 5.5h6" stroke="#000" stroke-width="2"/><path d="M18.5 2.5l7 7M25.5 2.5l-7 7" stroke="#000" stroke-width="1.6"/></svg><div class="a" style="left:771px;top:540px;width:50px;height:20px;border:1px solid #707070;border-radius:3px;background:linear-gradient(#f2f2f2,#ebebeb 50%,#dddddd 51%,#cfcfcf)"></div><div class="a" style="left:823px;top:540px;width:50px;height:20px;border:1px solid #707070;border-radius:3px;background:linear-gradient(#f2f2f2,#ebebeb 50%,#dddddd 51%,#cfcfcf)"></div><div class="a" style="left:876px;top:540px;width:50px;height:20px;border:1px solid #707070;border-radius:3px;background:linear-gradient(#f2f2f2,#ebebeb 50%,#dddddd 51%,#cfcfcf)"></div><div class="a" style="left:929px;top:540px;width:50px;height:20px;border:1px solid #adadad;border-radius:3px;background:linear-gradient(#f8f8f8,#f2f2f2 50%,#ebebeb 51%,#e6e6e6)"></div><div class="a" style="left:981px;top:540px;width:50px;height:20px;border:1px solid #707070;border-radius:3px;background:linear-gradient(#f2f2f2,#ebebeb 50%,#dddddd 51%,#cfcfcf)"></div><svg class="a" style="left:787px;top:544px" width="17" height="13" viewBox="0 0 15 12"><path d="M0.3 6.3C1.8 2 4.8 0.3 7.5 0.3C10.2 0.3 13.2 2 14.7 5.8C13.2 10 10.2 11.7 7.5 11.7C4.8 11.7 1.8 10 0.3 6.3Z" fill="#000"/><path d="M3 5.8C4.5 9.3 10.5 9.3 12 5.8C11 4 9.5 3.3 7.5 3.3C5.5 3.3 4 4 3 5.8Z" fill="#fff"/><circle cx="7.5" cy="5.3" r="2.3" fill="#000"/></svg><svg class="a" style="left:839px;top:544px" width="17" height="13" viewBox="0 0 15 12"><path d="M0.3 6.3C1.8 2 4.8 0.3 7.5 0.3C10.2 0.3 13.2 2 14.7 5.8C13.2 10 10.2 11.7 7.5 11.7C4.8 11.7 1.8 10 0.3 6.3Z" fill="#a8a8a8"/><path d="M3 5.8C4.5 9.3 10.5 9.3 12 5.8C11 4 9.5 3.3 7.5 3.3C5.5 3.3 4 4 3 5.8Z" fill="#fff"/><circle cx="7.5" cy="5.3" r="2.3" fill="#a8a8a8"/></svg><div class="a" style="left:895px;top:549px;width:13px;height:3px;background:#d00000"></div><div class="a" style="left:900px;top:544px;width:3px;height:13px;background:#d00000"></div><div class="a" style="left:947px;top:549px;width:13px;height:3px;background:#8c8c8c"></div><svg class="a" style="left:997px;top:541px" width="20" height="20" viewBox="0 0 20 20"><path d="M3 17l11-13 3 2.5-11 13z" fill="#f2b43c" stroke="#8a6020" stroke-width=".8"/><path d="M14 4l3 2.5 1.5-1.8-3-2.5z" fill="#e07070"/><path d="M3 17l-.8 2.5 3.8-.2z" fill="#333"/></svg><div class="a" style="left:770px;top:561px;width:262px;height:194px;background:#fff;border:1px solid #8c8c8c;border-right-color:#d5d5d5;border-bottom-color:#d5d5d5"></div><div class="a" style="left:772px;top:563px;width:258px;height:18px;border:1px solid #d9d9d9;border-radius:2px;background:linear-gradient(#f6f6f6,#ececec)"></div><svg class="a" style="left:775px;top:566px" width="15" height="12" viewBox="0 0 15 12"><path d="M0.3 6.3C1.8 2 4.8 0.3 7.5 0.3C10.2 0.3 13.2 2 14.7 5.8C13.2 10 10.2 11.7 7.5 11.7C4.8 11.7 1.8 10 0.3 6.3Z" fill="#1f3a5a"/><path d="M3 5.8C4.5 9.3 10.5 9.3 12 5.8C11 4 9.5 3.3 7.5 3.3C5.5 3.3 4 4 3 5.8Z" fill="#fff"/><circle cx="7.5" cy="5.3" r="2.3" fill="#1f3a5a"/></svg><svg class="a" style="left:795px;top:565px" width="10" height="14" viewBox="0 0 10 14"><path d="M1.5 7.5V4.5a3.5 3.5 0 0 1 7 0V7.5" fill="none" stroke="#8fa8c8" stroke-width="1.3"/><rect x="0" y="7" width="10" height="6.5" fill="#8fa8c8"/></svg><div class="t" style="left:813px;top:566.5px;font-size:12.5px;">0</div><svg class="a" style="left:775px;top:584px" width="15" height="12" viewBox="0 0 15 12"><path d="M0.3 6.3C1.8 2 4.8 0.3 7.5 0.3C10.2 0.3 13.2 2 14.7 5.8C13.2 10 10.2 11.7 7.5 11.7C4.8 11.7 1.8 10 0.3 6.3Z" fill="#000"/><path d="M3 5.8C4.5 9.3 10.5 9.3 12 5.8C11 4 9.5 3.3 7.5 3.3C5.5 3.3 4 4 3 5.8Z" fill="#fff"/><circle cx="7.5" cy="5.3" r="2.3" fill="#000"/></svg><svg class="a" style="left:795px;top:583px" width="10" height="14" viewBox="0 0 10 14"><path d="M1.5 7.5V4.5a3.5 3.5 0 0 1 7 0V7.5" fill="none" stroke="#a8a8a8" stroke-width="1.3"/><rect x="0" y="7" width="10" height="6.5" fill="#a8a8a8"/></svg><div class="t" style="left:813px;top:584.5px;font-size:12.5px;">axes</div><svg class="a" style="left:775px;top:602px" width="15" height="12" viewBox="0 0 15 12"><path d="M0.3 6.3C1.8 2 4.8 0.3 7.5 0.3C10.2 0.3 13.2 2 14.7 5.8C13.2 10 10.2 11.7 7.5 11.7C4.8 11.7 1.8 10 0.3 6.3Z" fill="#b4b4b4"/><path d="M3 5.8C4.5 9.3 10.5 9.3 12 5.8C11 4 9.5 3.3 7.5 3.3C5.5 3.3 4 4 3 5.8Z" fill="#fff"/><circle cx="7.5" cy="5.3" r="2.3" fill="#b4b4b4"/></svg><svg class="a" style="left:795px;top:601px" width="10" height="14" viewBox="0 0 10 14"><path d="M1.5 7.5V4.5a3.5 3.5 0 0 1 7 0V7.5" fill="none" stroke="#a8a8a8" stroke-width="1.3"/><rect x="0" y="7" width="10" height="6.5" fill="#a8a8a8"/></svg><div class="t" style="left:813px;top:602.5px;font-size:12.5px;">construction</div><svg class="a" style="left:775px;top:620px" width="15" height="12" viewBox="0 0 15 12"><path d="M0.3 6.3C1.8 2 4.8 0.3 7.5 0.3C10.2 0.3 13.2 2 14.7 5.8C13.2 10 10.2 11.7 7.5 11.7C4.8 11.7 1.8 10 0.3 6.3Z" fill="#000"/><path d="M3 5.8C4.5 9.3 10.5 9.3 12 5.8C11 4 9.5 3.3 7.5 3.3C5.5 3.3 4 4 3 5.8Z" fill="#fff"/><circle cx="7.5" cy="5.3" r="2.3" fill="#000"/></svg><svg class="a" style="left:795px;top:619px" width="10" height="14" viewBox="0 0 10 14"><path d="M1.5 7.5V4.5a3.5 3.5 0 0 1 7 0V7.5" fill="none" stroke="#a8a8a8" stroke-width="1.3"/><rect x="0" y="7" width="10" height="6.5" fill="#a8a8a8"/></svg><div class="t" style="left:813px;top:620.5px;font-size:12.5px;">contour</div><svg class="a" style="left:775px;top:638px" width="15" height="12" viewBox="0 0 15 12"><path d="M0.3 6.3C1.8 2 4.8 0.3 7.5 0.3C10.2 0.3 13.2 2 14.7 5.8C13.2 10 10.2 11.7 7.5 11.7C4.8 11.7 1.8 10 0.3 6.3Z" fill="#000"/><path d="M3 5.8C4.5 9.3 10.5 9.3 12 5.8C11 4 9.5 3.3 7.5 3.3C5.5 3.3 4 4 3 5.8Z" fill="#fff"/><circle cx="7.5" cy="5.3" r="2.3" fill="#000"/></svg><svg class="a" style="left:795px;top:637px" width="10" height="14" viewBox="0 0 10 14"><path d="M1.5 7.5V4.5a3.5 3.5 0 0 1 7 0V7.5" fill="none" stroke="#a8a8a8" stroke-width="1.3"/><rect x="0" y="7" width="10" height="6.5" fill="#a8a8a8"/></svg><div class="t" style="left:813px;top:638.5px;font-size:12.5px;">dim</div><svg class="a" style="left:775px;top:656px" width="15" height="12" viewBox="0 0 15 12"><path d="M0.3 6.3C1.8 2 4.8 0.3 7.5 0.3C10.2 0.3 13.2 2 14.7 5.8C13.2 10 10.2 11.7 7.5 11.7C4.8 11.7 1.8 10 0.3 6.3Z" fill="#000"/><path d="M3 5.8C4.5 9.3 10.5 9.3 12 5.8C11 4 9.5 3.3 7.5 3.3C5.5 3.3 4 4 3 5.8Z" fill="#fff"/><circle cx="7.5" cy="5.3" r="2.3" fill="#000"/></svg><svg class="a" style="left:795px;top:655px" width="10" height="14" viewBox="0 0 10 14"><path d="M1.5 7.5V4.5a3.5 3.5 0 0 1 7 0V7.5" fill="none" stroke="#a8a8a8" stroke-width="1.3"/><rect x="0" y="7" width="10" height="6.5" fill="#a8a8a8"/></svg><div class="t" style="left:813px;top:656.5px;font-size:12.5px;">hatch</div><svg class="a" style="left:775px;top:674px" width="15" height="12" viewBox="0 0 15 12"><path d="M0.3 6.3C1.8 2 4.8 0.3 7.5 0.3C10.2 0.3 13.2 2 14.7 5.8C13.2 10 10.2 11.7 7.5 11.7C4.8 11.7 1.8 10 0.3 6.3Z" fill="#000"/><path d="M3 5.8C4.5 9.3 10.5 9.3 12 5.8C11 4 9.5 3.3 7.5 3.3C5.5 3.3 4 4 3 5.8Z" fill="#fff"/><circle cx="7.5" cy="5.3" r="2.3" fill="#000"/></svg><svg class="a" style="left:795px;top:673px" width="10" height="14" viewBox="0 0 10 14"><path d="M1.5 7.5V4.5a3.5 3.5 0 0 1 7 0V7.5" fill="none" stroke="#a8a8a8" stroke-width="1.3"/><rect x="0" y="7" width="10" height="6.5" fill="#a8a8a8"/></svg><div class="t" style="left:813px;top:674.5px;font-size:12.5px;">hatch_border</div>
<!-- command -->
<div class="a" style="left:8px;top:758px;width:1024px;height:38px;background:#fff;border-left:1px solid #9e9e9e;border-right:1px solid #9e9e9e;overflow:hidden">
<div class="t" style="left:5px;top:-3.5px;font-size:10.4px;color:#1010d0"><i>Command:</i> snapauto</div>
<div class="t" style="left:5px;top:9.5px;font-size:10.4px;color:#1010d0"><i>Command:</i> snapauto</div>
<div class="t" style="left:5px;top:22.5px;font-size:10.4px;color:#1010d0"><i>Command:</i> linemenu</div>
<div class="a" style="left:1006px;top:0;width:16px;height:38px;background:#f0f0f0"></div>
<div class="a" style="left:1010px;top:11px;width:0;height:0;border-left:4px solid transparent;border-right:4px solid transparent;border-bottom:4px solid #303030"></div>
<div class="a" style="left:1010px;top:26px;width:0;height:0;border-left:4px solid transparent;border-right:4px solid transparent;border-top:4px solid #303030"></div>
<div class="a" style="left:1006px;top:17px;width:16px;height:2px;border-top:1px solid #c8c8c8;border-bottom:1px solid #fff"></div>
</div>
<div class="a" style="left:8px;top:795px;width:1024px;height:24px;background:#fff;border:1px solid #8f8f8f;border-left-color:#9a9a9a"></div>
<div class="t" style="left:9px;top:803.5px;font-size:10.3px">Command:</div>
<!-- status -->
<div class="a" style="left:8px;top:819px;width:1024px;height:37px;background:#f0f0f0"></div>
<div class="t" style="left:10px;top:824.7px;font-size:10.7px">55.6638,36.4368</div>
<div class="t" style="left:10px;top:841px;font-size:11px">-</div>
<div class="a" style="left:160px;top:821px;width:1px;height:33px;background:#c8c8c8"></div>
<div class="t" style="left:165px;top:824.7px;font-size:11px">66.529&lt;33.2083</div>
<div class="t" style="left:166px;top:841px;font-size:11px">-</div>
<div class="a" style="left:316px;top:821px;width:1px;height:33px;background:#c8c8c8"></div>
<div class="t" style="left:277px;width:150px;text-align:right;top:828px;font-size:9.6px;transform:scaleX(.9);transform-origin:right">Select entity or region</div>
<div class="t" style="left:277px;width:150px;text-align:right;top:840px;font-size:9.6px;transform:scaleX(.92);transform-origin:right">Move entity or reference</div>
<svg class="a" style="left:435px;top:822px" width="30" height="32" viewBox="0 0 30 32"><defs><radialGradient id="ms" cx=".45" cy=".35" r=".7"><stop offset="0" stop-color="#fff"/><stop offset=".7" stop-color="#e8e8e8"/><stop offset="1" stop-color="#a8a8a8"/></radialGradient></defs><path d="M7 1l2 3" stroke="#555" stroke-width="1"/><path d="M4 10C3 4 9 2 13 3C20 5 26 13 27 21C28 28 21 31 15 30C8 29 5 20 4 10Z" fill="url(#ms)" stroke="#7a7a7a" stroke-width="1"/><path d="M11 7c1 0 2 2 2 3.5s-1 1-2 .5-1-4 0-4z" fill="#4a6cd8"/><path d="M6 14c4 3 12 3 19 1" stroke="#cfcfcf" fill="none"/></svg>
<div class="a" style="left:578px;top:821px;width:1px;height:33px;background:#c8c8c8"></div>
<div class="t" style="left:583px;top:828px;font-size:9.6px;transform:scaleX(.91);transform-origin:left">Selected entities:</div>
<div class="t" style="left:583px;top:840px;font-size:9.6px;transform:scaleX(.9);transform-origin:left">1 Line on Layer "construction".</div>
<div class="a" style="left:776px;top:821px;width:1px;height:33px;background:#c8c8c8"></div>
<div class="a" style="left:909px;top:821px;width:1px;height:33px;background:#c8c8c8"></div>
<div class="t" style="left:925.5px;top:840px;font-size:13px;color:#9c9c9c">CSDN @</div><svg class="a" style="left:981px;top:841px" width="46" height="14" viewBox="0 0 46 14" stroke="#a0a0a0" stroke-width="1.25" fill="none"><path d="M6.5 0v5.5M3 2L1.5 4.5M10 1.5l1.5 2.5M2 8.3h9M6.5 5.5v7M0.5 12.8h12"/><g transform="translate(16,0)"><path d="M1.5 3.5h10v5.5h-10zM6.5 0v13.5"/></g><g transform="translate(31,0)"><path d="M1.5 0.8l1.5 1.5M0.3 5h2.5v5.5l-2 2M1.5 12.3c3 1 8 .6 13 .6M5 1.5h7.5M4.5 5h8.5M7.3 5c0 3-1 5-2.5 6.5M9.8 5v5c0 .6.4.8 1 .8h2"/></g></svg><div class="a" style="left:1026px;top:846px;width:4px;height:8px;background:repeating-linear-gradient(90deg,#b0b0b0 0,#b0b0b0 1px,transparent 1px,transparent 2px);-webkit-mask:repeating-linear-gradient(#000 0,#000 1px,transparent 1px,transparent 3px)"></div>

</body></html>
